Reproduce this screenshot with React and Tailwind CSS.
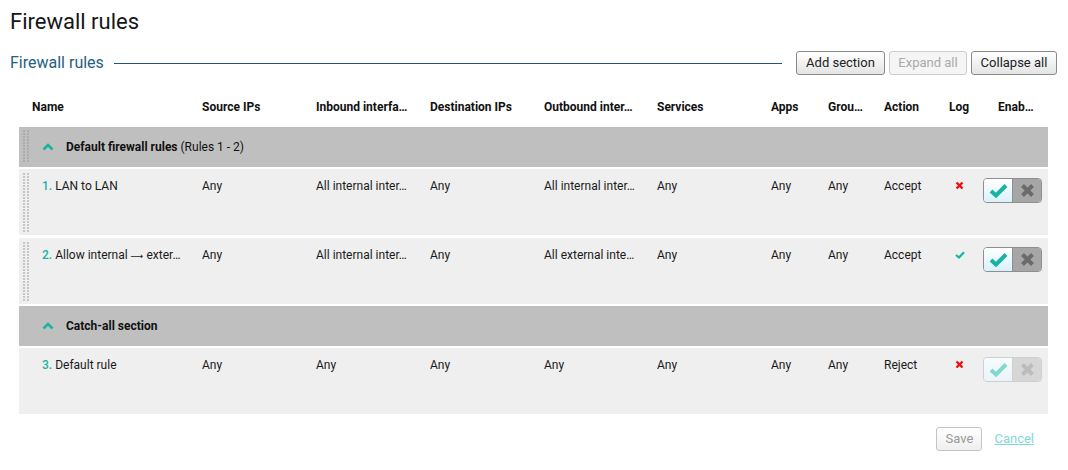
import React from "react";

const TEAL = "#17b3a3";
const COLS = "grid grid-cols-[170px_114px_114px_114px_113px_114px_57px_56px_65px_49px_63px]";

function Handle({ h, color }) {
  const n = Math.floor(h / 3);
  return (
    <svg width="6" height={h} className="absolute left-[4px]" style={{ top: 0 }}>
      {Array.from({ length: n }).map((_, i) => (
        <g key={i}>
          <rect x="0" y={i * 3} width="2" height="2" fill={color} />
          <rect x="4" y={i * 3} width="2" height="2" fill={color} />
        </g>
      ))}
    </svg>
  );
}

function Chevron() {
  return (
    <svg width="12" height="8" viewBox="0 0 12 8" className="shrink-0">
      <path d="M1.5 6.5 L6 2 L10.5 6.5" fill="none" stroke={TEAL} strokeWidth="2.6" />
    </svg>
  );
}

function SmallX() {
  return (
    <svg width="9" height="9" viewBox="0 0 9 9">
      <path d="M1.5 1.5 L7.5 7.5 M7.5 1.5 L1.5 7.5" stroke="#ee1111" strokeWidth="2.4" />
    </svg>
  );
}

function SmallCheck() {
  return (
    <svg width="10" height="8" viewBox="0 0 10 8">
      <path d="M1 4 L4 6.5 L9 1.2" fill="none" stroke={TEAL} strokeWidth="2.2" />
    </svg>
  );
}

function Toggle({ disabled }) {
  return (
    <div
      className={
        "flex h-[25px] w-[59px] overflow-hidden rounded-[4px] border -ml-[2px] " +
        (disabled ? "border-[#cfcfcf]" : "border-[#8f8f8f]")
      }
    >
      <div
        className={
          "flex w-[29px] items-center justify-center border-r " +
          (disabled
            ? "border-[#d0d0d0] bg-gradient-to-b from-[#f7fbfd] to-[#eaf4f8]"
            : "border-[#8f8f8f] bg-gradient-to-b from-[#ffffff] to-[#d9f1fb]")
        }
      >
        <svg width="19" height="15" viewBox="0 0 19 15">
          <path
            d="M2 8 L7 12.5 L17 2.5"
            fill="none"
            stroke={disabled ? "#80d8d0" : TEAL}
            strokeWidth="4"
          />
        </svg>
      </div>
      <div
        className={
          "flex flex-1 items-center justify-center " +
          (disabled ? "bg-[#d6d6d6]" : "bg-[#a6a6a6]")
        }
      >
        <svg width="15" height="15" viewBox="0 0 15 15">
          <path
            d="M2.5 2.5 L12.5 12.5 M12.5 2.5 L2.5 12.5"
            stroke={disabled ? "#bcbcbc" : "#6b6b6b"}
            strokeWidth="4"
          />
        </svg>
      </div>
    </div>
  );
}

function Cell({ children }) {
  return <div className="truncate whitespace-nowrap pl-[13px] pr-[6px] pt-[10px] leading-[14px]">{children}</div>;
}

function Section({ title, extra, handle, first }) {
  return (
    <div className={"relative flex h-[40px] items-center bg-[#bfbfbf] " + (first ? "" : "mt-[2px]")}>
      {handle && (
        <div className="absolute left-0 top-[3px]">
          <Handle h={33} color="#acacac" />
        </div>
      )}
      <div className="ml-[23px] flex items-center gap-[12px]">
        <Chevron />
        <span className="text-[12px] text-[#111]">
          <span className="font-bold">{title}</span>
          {extra && <span> {extra}</span>}
        </span>
      </div>
    </div>
  );
}

function Rule({ n, name, vals, action, log, disabled, handle, wideGap }) {
  return (
    <div
      className={
        "relative h-[66px] bg-[#efefef] text-[12px] text-[#1a1a1a] " +
        (wideGap ? "mt-[3px] " : "mt-[2px] ") +
        COLS
      }
    >
      {handle && (
        <div className="absolute left-0 top-[4px]">
          <Handle h={60} color="#c6c6c6" />
        </div>
      )}
      <div className="truncate whitespace-nowrap pl-[23px] pr-[6px] pt-[10px] leading-[14px]">
        <span className="font-medium" style={{ color: TEAL }}>{n}.</span> {name}
      </div>
      {vals.map((v, i) => (
        <Cell key={i}>{v}</Cell>
      ))}
      <Cell>Any</Cell>
      <Cell>Any</Cell>
      <Cell>{action}</Cell>
      <div className="flex pl-[19px] pt-[13px]">
        {log ? <SmallCheck /> : <div className="-mt-[1px]"><SmallX /></div>}
      </div>
      <div className="pt-[9px]">
        <Toggle disabled={disabled} />
      </div>
    </div>
  );
}

const btn = "h-[24px] rounded-[3px] border text-center text-[13px] leading-[22px]";

export default function App() {
  return (
    <div
      className="h-[470px] w-[1068px] bg-white px-[10px]"
      style={{ fontFamily: "Roboto, 'Liberation Sans', sans-serif" }}
    >
      <h1 className="pt-[9px] text-[22px] leading-[26px] text-[#161616]">Firewall rules</h1>
      <div className="mt-[16px] flex h-[24px] items-center">
        <span className="text-[16px] leading-[20px] text-[#25607f]">Firewall rules</span>
        <div className="ml-[10px] mr-[14px] h-px flex-1 bg-[#24556c]" />
        <div className="flex gap-[4px] pr-[1px]">
          <button className={btn + " w-[89px] border-[#8a8a8a] bg-gradient-to-b from-[#ffffff] to-[#e4e4e4] text-[#222]"}>
            Add section
          </button>
          <button className={btn + " w-[78px] border-[#cdcdcd] bg-[#f5f5f5] text-[#a9a9a9]"}>Expand all</button>
          <button className={btn + " w-[86px] border-[#8a8a8a] bg-gradient-to-b from-[#ffffff] to-[#e4e4e4] text-[#222]"}>
            Collapse all
          </button>
        </div>
      </div>

      <div className="ml-[9px] w-[1029px]">
        <div className={"mt-[13px] h-[39px] text-[12px] font-bold text-[#111] " + COLS}>
          {[
            "Name",
            "Source IPs",
            "Inbound interfa…",
            "Destination IPs",
            "Outbound inter…",
            "Services",
            "Apps",
            "Grou…",
            "Action",
            "Log",
            "Enab…",
          ].map((h) => (
            <div key={h} className="truncate whitespace-nowrap pl-[13px] pt-[12px] leading-[14px]">
              {h}
            </div>
          ))}
        </div>

        <Section title="Default firewall rules" extra="(Rules 1 - 2)" handle first />
        <Rule
          n={1}
          name="LAN to LAN"
          vals={["Any", "All internal inter…", "Any", "All internal inter…", "Any"]}
          action="Accept"
          log={false}
          handle
        />
        <Rule
          n={2}
          name={
            <>
              Allow internal <span style={{ fontFamily: "'DejaVu Sans', sans-serif" }} className="text-[9px]">⟶</span> exter…
            </>
          }
          vals={["Any", "All internal inter…", "Any", "All external inte…", "Any"]}
          action="Accept"
          log={true}
          handle
          wideGap
        />
        <Section title="Catch-all section" />
        <Rule
          n={3}
          name="Default rule"
          vals={["Any", "Any", "Any", "Any", "Any"]}
          action="Reject"
          log={false}
          disabled
        />
      </div>

      <div className="mt-[13px] flex items-center justify-end gap-[12px] pr-[24px]">
        <button className={btn + " w-[46px] border-[#c4c4c4] bg-gradient-to-b from-[#ffffff] to-[#efefef] text-[#9a9a9a]"}>
          Save
        </button>
        <a className="text-[13px] text-[#7fd9d5] underline">Cancel</a>
      </div>
    </div>
  );
}
